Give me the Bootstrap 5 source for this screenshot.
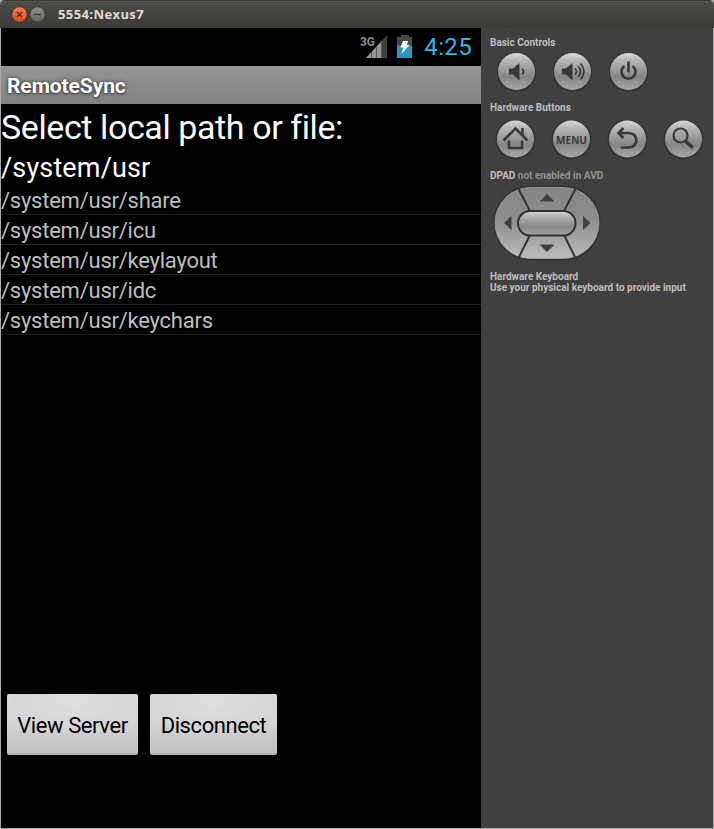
<!DOCTYPE html>
<html lang="en">
<head>
<meta charset="utf-8">
<title>5554:Nexus7</title>
<link href="https://cdn.jsdelivr.net/npm/bootstrap@5.3.0/dist/css/bootstrap.min.css" rel="stylesheet">
<style>
body{font-family:Roboto,"Liberation Sans",sans-serif;background:#aaa9a7;width:714px;height:829px;overflow:hidden}
.titlebar{height:28px;padding-left:11px;background:linear-gradient(#3a3935 0,#3a3935 1px,#65635d 1px,#4c4b45 2px,#3c3b37 28px);border-radius:5px 5px 0 0}
.win-name{font:bold 13px "Noto Sans","Open Sans",sans-serif;color:#dfdbd2;margin-left:11px;line-height:28px;letter-spacing:.4px}
.win-name{display:inline-block;font-family:"Open Sans","Noto Sans",sans-serif}
.main{height:800px;margin:0 1px}
.device{width:480px;background:#000;color:#fff}
.status{height:38px;padding-right:9px}
.clock{font-size:24px;line-height:40px;color:#33b5e5;margin-left:10px;letter-spacing:.35px}
.app-title{height:38px;line-height:40px;padding-left:6px;font-size:21px;font-weight:700;letter-spacing:-.08px;background:linear-gradient(#999599 0,#929292 5px,#868686 30px,#828182);text-shadow:0 0 4px #333,0 1px 2px #444}
.heading{font-size:34px;line-height:46px;height:46px;letter-spacing:-.4px}
.path{font-size:27px;line-height:36px;height:35px;letter-spacing:.15px}
.entry{height:30px;line-height:32px;font-size:22px;letter-spacing:-.24px;color:#bebebe;border-bottom:1px solid #222;white-space:nowrap}
.actions{padding:0 6px 73px;gap:12px}
.tile{height:61px;border-radius:2px;background:radial-gradient(ellipse 90px 36px at 50% 8px,#e0dfe0,#d7d5d7 60%,transparent),linear-gradient(#e5e4e5,#c6c5c6 52px,#c2c1c2 58px,#aaa);color:#000;font-size:22px;padding:0;line-height:63px;letter-spacing:-.42px}
.tile-view{width:131px}
.tile-disconnect{width:127px}
.controls{width:232px;background:#404040;color:#bebebe;padding:9px 0 0 9px;font-size:10px;font-weight:700;line-height:11px}
.knobs{gap:12px}
.knobs-basic{padding:2px 0 0 5px;margin-bottom:8px}
.knobs-hardware{padding:4px 0 0 4px;margin-bottom:9px}
.dim{color:#929292}
.pad{display:block;margin:1px 0 7px}
</style>
</head>
<body>
<header class="titlebar d-flex align-items-center">
<svg width="36" height="18" viewBox="0 0 36 18"><defs><linearGradient id="red" x2="0" y2="1"><stop stop-color="#f58462"/><stop offset="1" stop-color="#dd4a1c"/></linearGradient><linearGradient id="grey" x2="0" y2="1"><stop stop-color="#92918a"/><stop offset="1" stop-color="#64635d"/></linearGradient></defs>
<circle cx="8.5" cy="9.500" r="7.7" fill="url(#red)" stroke="#33322e" stroke-width=".8"/><path d="M6 7l5 5m0-5l-5 5" stroke="#5a2515" stroke-width="1.2"/><circle cx="26.5" cy="9.500" r="7.7" fill="url(#grey)" stroke="#33322e" stroke-width=".8"/><path d="M23 9.5h7" stroke="#32312e" stroke-width="1.2"/></svg>
<span class="win-name">5554:Nexus7</span>
</header>
<main class="main d-flex">
<section class="device d-flex flex-column">
<div class="status d-flex justify-content-end align-items-center">
<svg width="54" height="28" viewBox="0 0 54 28"><text x="0" y="12.500" font-family="Roboto" font-size="12.500" font-weight="700" textLength="15" lengthAdjust="spacingAndGlyphs" fill="#898989">3G</text>
<path d="M6 25L27 2V25Z" fill="#404040"/><path d="M6 25L22 7.500V25Z" fill="#969696"/><path d="M11.500 19v6M16.500 14v11M21.500 9v16" stroke="#555"/>
<path d="M37 4h4V2h8v2h3v9H37z" fill="#484848"/><path d="M37 12.500h15V25H37z" fill="#3096be"/><path d="M43 8h5l-1 4h2.500l-8 9 2-6.500H40.500z" fill="#fff"/></svg>
<span class="clock">4:25</span></div>
<div class="app-title">RemoteSync</div>
<div class="heading">Select local path or file:</div>
<div class="path">/system/usr</div>
<div class="flex-grow-1">
<div class="entry">/system/usr/share</div><div class="entry">/system/usr/icu</div><div class="entry">/system/usr/keylayout</div><div class="entry">/system/usr/idc</div><div class="entry">/system/usr/keychars</div>
</div>
<div class="actions d-flex"><button class="tile tile-view border-0">View Server</button><button class="tile tile-disconnect border-0">Disconnect</button></div>
</section>
<aside class="controls">
<div>Basic Controls</div>
<div class="knobs knobs-basic d-flex">
<svg width="44" height="44" viewBox="-21.500 -21.500 44 44"><defs><linearGradient id="knob" x2="0" y2="1"><stop stop-color="#dadada"/><stop offset=".18" stop-color="#b9b9b9"/><stop offset=".65" stop-color="#858585"/><stop offset="1" stop-color="#a8a8a8"/></linearGradient><g id="base"><circle cy=".5" r="20" fill="#343434"/><circle r="18.500" fill="url(#knob)"/></g></defs><use href="#base"/><path d="M-7.500-3h4L3-8.500V9l-6.500-6h-4z" fill="#383838"/><path d="M5.500-3q3 3 0 6" fill="none" stroke="#383838" stroke-width="1.700"/></svg>
<svg width="44" height="44" viewBox="-21.500 -21.500 44 44"><use href="#base"/><path d="M-10.500-3h4L0-8.500V9l-6.500-6h-4z" fill="#383838"/><path d="M2.500-3q3 3 0 6M5.500-5.500q5 5.500 0 11M8-8q7 8 0 16" fill="none" stroke="#383838" stroke-width="1.700"/></svg>
<svg width="44" height="44" viewBox="-21.500 -21.500 44 44"><use href="#base"/><path d="M-4-5.500A7 7 0 1 0 4-5.500M0-10V1" fill="none" stroke="#383838" stroke-width="2.600"/></svg>
</div>
<div>Hardware Buttons</div>
<div class="knobs knobs-hardware d-flex">
<svg width="44" height="44" viewBox="-21.500 -22 44 44"><use href="#base"/><path d="M-12 1.500L0-10.500L12 1.500M7-11v7M-6.500 1.500V9h13V1.500" fill="none" stroke="#383838" stroke-width="2.500"/></svg>
<svg width="44" height="44" viewBox="-21.500 -22 44 44"><use href="#base"/><text x="-15.500" y="5" font-family="Open Sans" font-size="11" font-weight="700" textLength="31" lengthAdjust="spacingAndGlyphs" fill="#383838">MENU</text></svg>
<svg width="44" height="44" viewBox="-21.500 -22 44 44"><use href="#base"/><path d="M-4-11L-9-6L-4-1M-9-6H1C11.500-6 11.500 8.500 1 8.500H-7" fill="none" stroke="#383838" stroke-width="2.600"/></svg>
<svg width="44" height="44" viewBox="-21.500 -22 44 44"><use href="#base"/><circle cx="-3" cy="-3.500" r="7" fill="none" stroke="#383838" stroke-width="2.200"/><path d="M2 2L9.500 9" stroke="#383838" stroke-width="3.500"/></svg>
</div>
<div>DPAD <span class="dim">not enabled in AVD</span></div>
<svg class="pad" width="116" height="82" viewBox="490 182 116 82"><defs><linearGradient id="dpad" x2="0" y2="1"><stop stop-color="#858585"/><stop offset=".45" stop-color="#8d8d8d"/><stop offset="1" stop-color="#bcbcbc"/></linearGradient></defs>
<rect x="493.500" y="185.500" width="107" height="75" rx="37" fill="#303030"/><rect x="495" y="187.500" width="104" height="71" rx="35.500" fill="url(#dpad)" stroke="#aaa" stroke-width=".7"/><path d="M518 188l12 23M576 188l-12 23M530 235l-12 24M564 235l12 24" stroke="#333" stroke-width="2"/><rect x="518" y="211" width="57.500" height="24.500" rx="12.200" fill="url(#knob)" stroke="#303030" stroke-width="2"/><path d="M547 194l7.500 7.500h-15zM547 252l7.500-7.500h-15zM504 223l7.500-7v14zM590.500 223l-7.500-7v14z" fill="#404040"/></svg>
<div>Hardware Keyboard<br>Use your physical keyboard to provide input</div>
</aside>
</main>
<script src="https://cdn.jsdelivr.net/npm/bootstrap@5.3.0/dist/js/bootstrap.bundle.min.js"></script>
</body>
</html>
